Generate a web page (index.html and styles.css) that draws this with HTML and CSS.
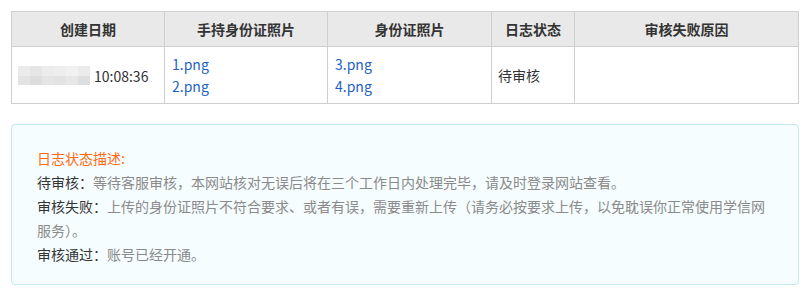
FILE: index.html
```html
<!DOCTYPE html>
<html lang="zh-CN">
<head>
<meta charset="utf-8">
<title>日志</title>
<link rel="stylesheet" href="styles.css">
</head>
<body>
<div class="page">
  <table class="log-table">
    <colgroup>
      <col class="c1"><col class="c2"><col class="c3"><col class="c4"><col class="c5">
    </colgroup>
    <thead>
      <tr>
        <th>创建日期</th>
        <th>手持身份证照片</th>
        <th>身份证照片</th>
        <th>日志状态</th>
        <th>审核失败原因</th>
      </tr>
    </thead>
    <tbody>
      <tr>
        <td class="date-cell"><span class="blur"><i></i><i></i><i></i><i></i><i></i><i></i><i></i><i></i><i></i><i></i><i></i><i></i></span><span class="time">10:08:36</span></td>
        <td class="links"><a href="#">1.png</a><a href="#">2.png</a></td>
        <td class="links"><a href="#">3.png</a><a href="#">4.png</a></td>
        <td class="status">待审核</td>
        <td></td>
      </tr>
    </tbody>
  </table>

  <div class="desc">
    <p class="desc-title">日志状态描述:</p>
    <p><span class="lbl">待审核：</span><span class="txt">等待客服审核，本网站核对无误后将在三个工作日内处理完毕，请及时登录网站查看。</span></p>
    <p><span class="lbl">审核失败：</span><span class="txt">上传的身份证照片不符合要求、或者有误，需要重新上传（请务必按要求上传，以免耽误你正常使用学信网服务）。</span></p>
    <p><span class="lbl">审核通过：</span><span class="txt">账号已经开通。</span></p>
  </div>
</div>
</body>
</html>
```
FILE: styles.css
```css
html, body {
  margin: 0;
  padding: 0;
  background: #fff;
}
body {
  font-family: "Noto Sans CJK SC", "Microsoft YaHei", sans-serif;
  font-size: 14px;
  color: #333;
}
.page {
  padding: 11px 12px 11px 11px;
}
.log-table {
  width: 787px;
  border-collapse: collapse;
  table-layout: fixed;
}
.c1 { width: 153px; }
.c2 { width: 163px; }
.c3 { width: 164px; }
.c4 { width: 83px; }
.c5 { width: 224px; }
.log-table th,
.log-table td {
  border: 1px solid #cfcfcf;
}
.log-table th {
  background: #e9e9e9;
  height: 34px;
  padding: 0;
  font-weight: bold;
  color: #333;
  text-align: center;
  font-size: 14px;
}
.log-table td {
  height: 56px;
  padding: 0 6px;
  vertical-align: middle;
  color: #333;
}
.date-cell {
  white-space: nowrap;
}
.blur {
  display: inline-grid;
  grid-template-columns: repeat(6, 12px);
  grid-template-rows: 10px 9px;
  vertical-align: middle;
  margin-right: 4px;
  position: relative;
  top: -1px;
}
.blur i { display: block; }
.blur i:nth-child(1) { background: #ebebeb; }
.blur i:nth-child(2) { background: #e6e6e6; }
.blur i:nth-child(3) { background: #ececec; }
.blur i:nth-child(4) { background: #eeeeee; }
.blur i:nth-child(5) { background: #f1f1f1; }
.blur i:nth-child(6) { background: #ebebeb; }
.blur i:nth-child(7) { background: #e3e3e3; }
.blur i:nth-child(8) { background: #dddddd; }
.blur i:nth-child(9) { background: #e5e5e5; }
.blur i:nth-child(10) { background: #e3e3e3; }
.blur i:nth-child(11) { background: #e7e7e7; }
.blur i:nth-child(12) { background: #dedede; }
.time {
  vertical-align: middle;
  font-size: 14px;
  color: #333;
}
.links a {
  display: block;
  color: #1d62c8;
  text-decoration: none;
  line-height: 22px;
  font-size: 14px;
  padding-left: 1px;
}
.status {
  font-size: 14px;
}
.desc {
  margin-top: 20px;
  width: 737px;
  border: 1px solid #c3e8ee;
  border-radius: 4px;
  background: #f5fdff;
  padding: 21px 24px 18px 25px;
}
.desc p {
  margin: 0;
  line-height: 24px;
}
.desc-title {
  color: #ff6a10;
}
.lbl {
  color: #333;
}
.txt {
  color: #8a8a8a;
}
```
